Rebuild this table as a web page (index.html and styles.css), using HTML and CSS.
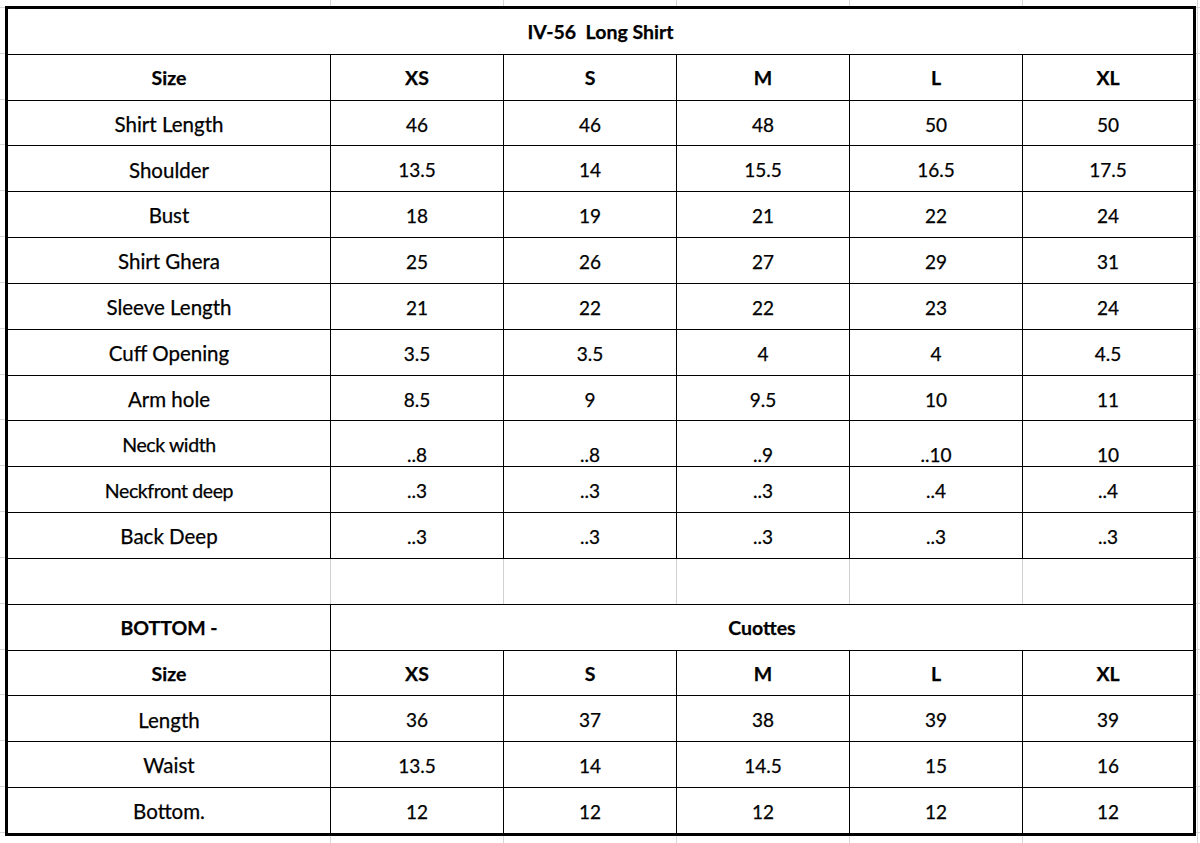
FILE: index.html
```html
<!DOCTYPE html>
<html lang="en">
<head>
<meta charset="utf-8">
<title>IV-56 Long Shirt – Size Chart</title>
<link rel="stylesheet" href="styles.css">
</head>
<body>
<div class="sheet">
  <div class="chart">
    <div class="cell title">IV-56&nbsp;&nbsp;Long Shirt</div>

    <div class="cell head">Size</div>
    <div class="cell head">XS</div>
    <div class="cell head">S</div>
    <div class="cell head">M</div>
    <div class="cell head">L</div>
    <div class="cell head">XL</div>

    <div class="cell label">Shirt Length</div>
    <div class="cell val">46</div><div class="cell val">46</div><div class="cell val">48</div><div class="cell val">50</div><div class="cell val">50</div>

    <div class="cell label">Shoulder</div>
    <div class="cell val">13.5</div><div class="cell val">14</div><div class="cell val">15.5</div><div class="cell val">16.5</div><div class="cell val">17.5</div>

    <div class="cell label">Bust</div>
    <div class="cell val">18</div><div class="cell val">19</div><div class="cell val">21</div><div class="cell val">22</div><div class="cell val">24</div>

    <div class="cell label">Shirt Ghera</div>
    <div class="cell val">25</div><div class="cell val">26</div><div class="cell val">27</div><div class="cell val">29</div><div class="cell val">31</div>

    <div class="cell label">Sleeve Length</div>
    <div class="cell val">21</div><div class="cell val">22</div><div class="cell val">22</div><div class="cell val">23</div><div class="cell val">24</div>

    <div class="cell label">Cuff Opening</div>
    <div class="cell val">3.5</div><div class="cell val">3.5</div><div class="cell val">4</div><div class="cell val">4</div><div class="cell val">4.5</div>

    <div class="cell label">Arm hole</div>
    <div class="cell val">8.5</div><div class="cell val">9</div><div class="cell val">9.5</div><div class="cell val">10</div><div class="cell val">11</div>

    <div class="cell label small">Neck width</div>
    <div class="cell val low">..8</div><div class="cell val low">..8</div><div class="cell val low">..9</div><div class="cell val low">..10</div><div class="cell val low">10</div>

    <div class="cell label small">Neckfront deep</div>
    <div class="cell val">..3</div><div class="cell val">..3</div><div class="cell val">..3</div><div class="cell val">..4</div><div class="cell val">..4</div>

    <div class="cell label">Back Deep</div>
    <div class="cell val">..3</div><div class="cell val">..3</div><div class="cell val">..3</div><div class="cell val">..3</div><div class="cell val">..3</div>

    <div class="blank-row">
      <div class="cell"></div><div class="cell"></div><div class="cell"></div><div class="cell"></div><div class="cell"></div><div class="cell"></div>
    </div>

    <div class="cell head">BOTTOM -</div>
    <div class="cell head span5">Cuottes</div>

    <div class="cell head">Size</div>
    <div class="cell head">XS</div>
    <div class="cell head">S</div>
    <div class="cell head">M</div>
    <div class="cell head">L</div>
    <div class="cell head">XL</div>

    <div class="cell label">Length</div>
    <div class="cell val">36</div><div class="cell val">37</div><div class="cell val">38</div><div class="cell val">39</div><div class="cell val">39</div>

    <div class="cell label">Waist</div>
    <div class="cell val">13.5</div><div class="cell val">14</div><div class="cell val">14.5</div><div class="cell val">15</div><div class="cell val">16</div>

    <div class="cell label">Bottom.</div>
    <div class="cell val">12</div><div class="cell val">12</div><div class="cell val">12</div><div class="cell val">12</div><div class="cell val">12</div>
  </div>
</div>
</body>
</html>
```

FILE: styles.css
```css
html, body {
  margin: 0;
  padding: 0;
  background: #ffffff;
}

body {
  font-family: "Lato", "Liberation Sans", sans-serif;
  color: #000;
  width: 1200px;
  height: 843px;
  overflow: hidden;
}

.sheet {
  width: 1200px;
  height: 843px;
  box-sizing: border-box;
  padding: 6px 0 0 5px;
  background-color: #ffffff;
  background-image:
    linear-gradient(to right,
      transparent 330px, #d6d6d6 330px, #d6d6d6 331px, transparent 331px,
      transparent 503px, #d6d6d6 503px, #d6d6d6 504px, transparent 504px,
      transparent 676px, #d6d6d6 676px, #d6d6d6 677px, transparent 677px,
      transparent 849px, #d6d6d6 849px, #d6d6d6 850px, transparent 850px,
      transparent 1022px, #d6d6d6 1022px, #d6d6d6 1023px, transparent 1023px,
      transparent 1197px, #d6d6d6 1197px, #d6d6d6 1198px, transparent 1198px),
    repeating-linear-gradient(to bottom,
      #d6d6d6 0, #d6d6d6 1px, transparent 1px, transparent 45.83px);
  background-position: 0 0, 0 7px;
}

.chart {
  display: grid;
  grid-template-columns: 322px 172px 172px 172px 172px 170px;
  grid-auto-rows: 44.83px;
  gap: 1px;
  width: max-content;
  background: #000;
  border: 3px solid #000;
}

.cell {
  background: #fff;
  display: flex;
  align-items: center;
  justify-content: center;
  font-size: 18px;
  line-height: 1;
  white-space: nowrap;
  box-sizing: border-box;
  padding-top: 2px;
  -webkit-text-stroke: 0.25px #000;
}

.title {
  grid-column: 1 / -1;
  font-weight: 700;
  font-size: 19.5px;
  padding-top: 0;
}

.head {
  font-weight: 700;
  font-size: 19.5px;
}

.label {
  font-size: 20.5px;
}

.label.small {
  font-size: 19.5px;
  letter-spacing: -0.4px;
}

.val {
  font-size: 19px;
}

.val.low {
  align-items: flex-end;
  padding-bottom: 2px;
}

.span5 {
  grid-column: 2 / -1;
}

.blank-row {
  grid-column: 1 / -1;
  display: grid;
  grid-template-columns: 322px 172px 172px 172px 172px 170px;
  gap: 1px;
  background: #d0d0d0;
}
```
